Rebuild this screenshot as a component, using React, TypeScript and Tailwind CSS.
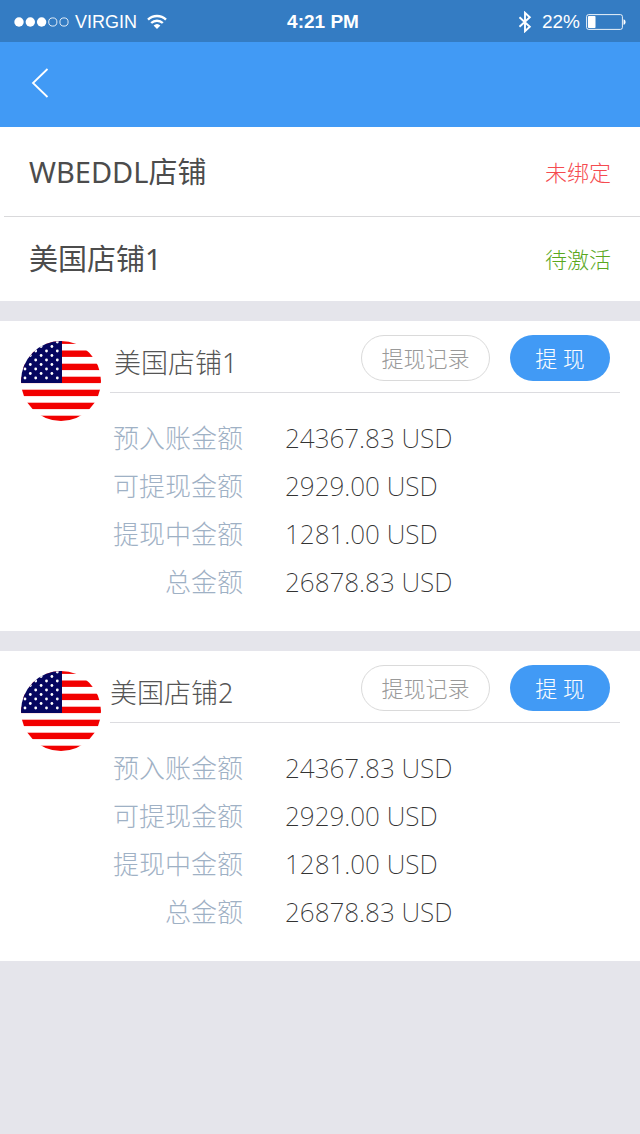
type Store = { name: string; status: string; tone: string };
type Account = { name: string; indent: string; rows: [string, string][] };

const stores: Store[] = [
  { name: 'WBEDDL店铺', status: '未绑定', tone: 'text-[#f54b4f]' },
  { name: '美国店铺1', status: '待激活', tone: 'text-[#5aa81e]' },
];

const amounts: [string, string][] = [
  ['预入账金额', '24367.83 USD'],
  ['可提现金额', '2929.00 USD'],
  ['提现中金额', '1281.00 USD'],
  ['总金额', '26878.83 USD'],
];

const accounts: Account[] = [
  { name: '美国店铺1', indent: 'pl-1', rows: amounts },
  { name: '美国店铺2', indent: 'pl-0', rows: amounts },
];

function Signal() {
  return (
    <svg width="56" height="12" viewBox="0 0 56 12" aria-hidden="true">
      <g fill="#fff">
        <circle cx="5" cy="6" r="4.7" />
        <circle cx="16.3" cy="6" r="4.7" />
        <circle cx="27.6" cy="6" r="4.7" />
      </g>
      <g fill="none" stroke="#fff" strokeOpacity="0.85">
        <circle cx="38.8" cy="6" r="4.1" />
        <circle cx="50" cy="6" r="4.1" />
      </g>
    </svg>
  );
}

function Wifi() {
  return (
    <svg width="20" height="16" viewBox="0 0 20 16" aria-hidden="true">
      <g fill="none" stroke="#fff" strokeWidth="2.4">
        <path d="M1 5.6a13 13 0 0 1 18 0" />
        <path d="M4.2 9a8.4 8.4 0 0 1 11.6 0" />
      </g>
      <path d="M6.6 11.6a5 5 0 0 1 6.8 0L10 15z" fill="#fff" />
    </svg>
  );
}

function Bluetooth() {
  return (
    <svg width="14" height="22" viewBox="0 0 14 22" aria-hidden="true">
      <path d="M1.500 6.200l10.300 9.600L7 20.200V1.800l4.800 4.400L1.500 15.800" fill="none" stroke="#fff" strokeWidth="1.9" />
    </svg>
  );
}

function Battery() {
  return (
    <svg width="40" height="16" viewBox="0 0 40 16" aria-hidden="true">
      <rect x="0.6" y="0.6" width="35.8" height="14.8" rx="2" fill="none" stroke="#fff" strokeOpacity="0.9" />
      <rect x="2" y="2" width="7.5" height="12" rx="0.8" fill="#fff" />
      <path d="M37.500 5.200c2.800.6 2.800 5 0 5.600z" fill="#fff" />
    </svg>
  );
}

const stripeTops = [-3.5, 9.5, 22.7, 35.7, 48.7, 61.7, 74.7];
const starRows = [1, 5.5, 10, 14.5, 19, 23.5, 28, 32.5, 37];

function Flag() {
  return (
    <svg width="80" height="80" viewBox="0 0 80 80" role="img" aria-label="USA" className="block rounded-full">
      <rect width="80" height="80" fill="#fff" />
      {stripeTops.map((y) => (
        <rect key={y} y={y} width="80" height="6.4" fill="#f20000" />
      ))}
      <rect width="41" height="42" fill="#06065f" />
      {starRows.map((y, row) =>
        (row % 2 === 0 ? [4, 14.7, 25.5, 36.3] : [9.3, 20.1, 30.9]).map((x) => (
          <circle key={`${x}-${y}`} cx={x} cy={y} r="1.4" fill="#fff" />
        )),
      )}
    </svg>
  );
}

function AccountCard({ account }: { account: Account }) {
  return (
    <section className="flex bg-white pr-5 pb-[26px]">
      <div className="w-[110px] shrink-0 pt-5 pl-[21px]">
        <Flag />
      </div>
      <div className="min-w-0 flex-1">
        <header className="flex h-[72px] items-start border-b border-[#dcdce0] pt-[14px] pr-[10px]">
          <h2 className={`flex-1 pt-2 text-[27px] leading-10 font-light text-[#555] ${account.indent}`}>{account.name}</h2>
          <button type="button" className="h-[46px] w-[129px] rounded-full border border-[#dadada] text-[22px] font-light text-[#999]">
            提现记录
          </button>
          <button type="button" className="ml-5 h-[46px] w-[100px] rounded-full bg-[#419af5] text-[22px] font-light text-white">
            提 现
          </button>
        </header>
        <dl className="mt-5">
          {account.rows.map(([label, value]) => (
            <div key={label} className="flex h-12 items-center pt-0.5">
              <dt className="w-[133px] text-right text-[26px] leading-8 font-light text-[#9fb1c5]">{label}</dt>
              <dd className="ml-[42px] text-[26px] leading-8 font-extralight text-[#333]">{value}</dd>
            </div>
          ))}
        </dl>
      </div>
    </section>
  );
}

export default function App() {
  return (
    <div className="min-h-screen bg-[#e5e5eb] font-['Noto_Sans','Noto_Sans_CJK_SC',sans-serif]">
      <div className="grid h-[42px] grid-cols-[1fr_auto_1fr] items-center bg-[#347cc3] px-[14px] pt-0.5 font-['Liberation_Sans',sans-serif] text-[19px] leading-6 text-white">
        <div className="flex items-center">
          <Signal />
          <span className="ml-[5px] text-[18px]">VIRGIN</span>
          <span className="ml-2.5">
            <Wifi />
          </span>
        </div>
        <span className="pl-1.5 font-bold">4:21 PM</span>
        <div className="flex items-center justify-end">
          <Bluetooth />
          <span className="mr-1.5 ml-2.5">22%</span>
          <Battery />
        </div>
      </div>
      <nav className="flex h-[85px] items-center bg-[#419af5] pl-[31px]">
        <button type="button" aria-label="返回" className="mb-1">
          <svg width="18" height="30" viewBox="0 0 18 30" className="block">
            <path d="M16.500 1L2 15l14.500 14" fill="none" stroke="#fff" strokeWidth="1.8" />
          </svg>
        </button>
      </nav>
      <ul className="bg-white">
        {stores.map((store, index) => (
          <li
            key={store.name}
            className={`ml-1 flex items-center justify-between pr-[29px] pl-[25px] ${index === 0 ? 'h-[90px] border-b border-[#d9d9db]' : 'h-[84px]'}`}
          >
            <span className="text-[29px] leading-10 text-[#4c4c4c]">{store.name}</span>
            <span className={`text-[22px] leading-8 font-light ${store.tone}`}>{store.status}</span>
          </li>
        ))}
      </ul>
      <main className="mt-5 flex flex-col gap-5">
        {accounts.map((account) => (
          <AccountCard key={account.name} account={account} />
        ))}
      </main>
    </div>
  );
}
